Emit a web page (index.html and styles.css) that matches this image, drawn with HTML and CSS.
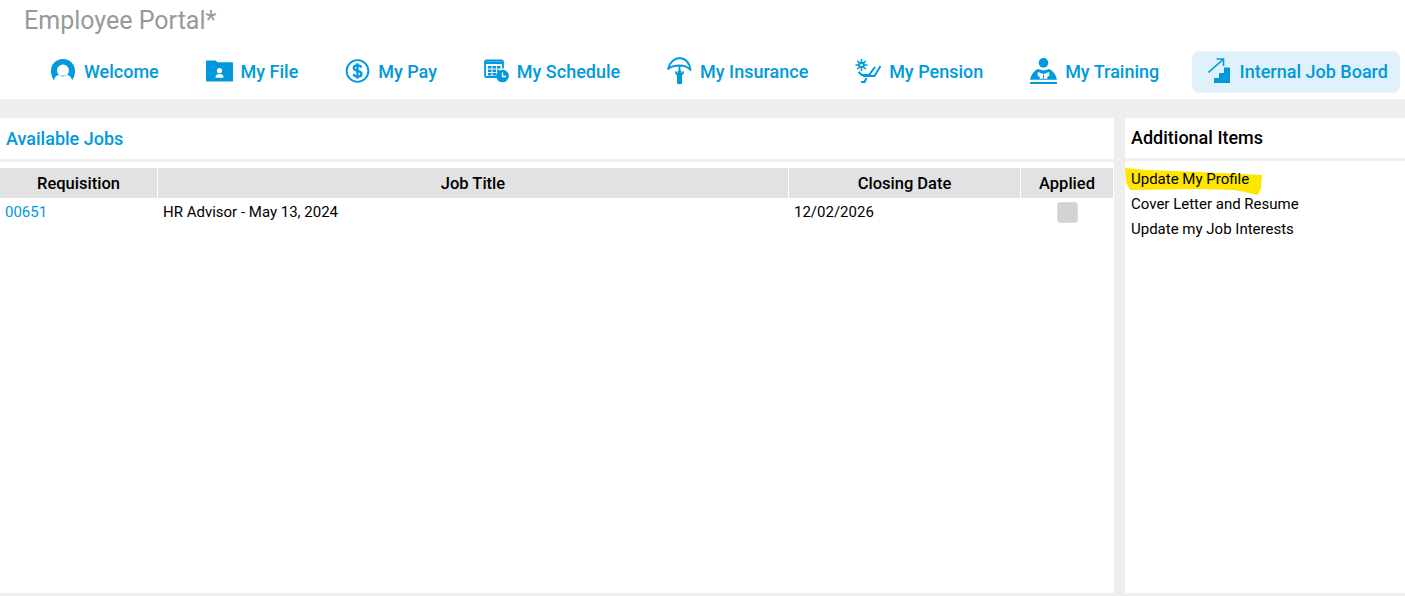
FILE: index.html
```html
<!DOCTYPE html>
<html lang="en">
<head>
<meta charset="utf-8">
<title>Employee Portal</title>
<link rel="stylesheet" href="styles.css">
</head>
<body>
<header class="top">
  <div class="brand">Employee Portal*</div>
  <nav class="nav">
    <a class="nav-item">
      <svg class="ico w26" viewBox="0 0 26 24"><path fill="#0099dd" fill-rule="evenodd" d="M13 0C6 0 1 5 1 12c0 3 1 6 2 8l1 1c1-3 2-4 4-5 3 1 7 1 10 0 2 1 3 2 4 5l1-1c1-2 2-5 2-8C25 5 20 0 13 0zm0 5.500a6 6 0 1 1 0 12 6 6 0 0 1 0-12z"/></svg>
      <span>Welcome</span>
    </a>
    <a class="nav-item">
      <svg class="ico w27" viewBox="0 0 28 22"><path fill="#0099dd" fill-rule="evenodd" d="M0 1q0-1 1-1h9l2 2h15q1 0 1 1v18q0 1-1 1H1q-1 0-1-1zM14 8a2.700 2.700 0 1 0 0 5.400 2.700 2.700 0 0 0 0-5.400zM10 18h8v-2q-1-2-4-2t-4 2z"/></svg>
      <span>My File</span>
    </a>
    <a class="nav-item">
      <svg class="ico w25" viewBox="0 0 25 25"><circle cx="12.500" cy="12.500" r="11.300" fill="none" stroke="#0099dd" stroke-width="2"/><path fill="none" stroke="#0099dd" stroke-width="2.400" d="M16.500 8.800c-.6-1.500-2.200-2.100-4-2.100-2.200 0-3.900 1-3.900 2.800 0 4 8 1.800 8 6 0 1.800-1.800 2.800-4 2.800-2 0-3.700-.8-4.300-2.400M12.500 4.500v16"/></svg>
      <span>My Pay</span>
    </a>
    <a class="nav-item">
      <svg class="ico w25" viewBox="0 0 25 23"><path fill="none" stroke="#0099dd" stroke-width="1.800" d="M14 17.500H2.500Q1 17.500 1 16V2.500Q1 1 2.500 1h15Q19 1 19 2.500V9"/><path fill="#0099dd" d="M1 2h18v2.500H1zM4 6.500h3.500v2.500H4zM8.500 6.500H12v2.500H8.500zM13 6.500h3.500v2.500H13zM4 10h3.500v2.500H4zM8.500 10H12v2.500H8.500zM13 10h2v2.500h-2zM4 13.500h3.500V16H4zM8.500 13.500H12V16H8.500z"/><circle cx="18.500" cy="16.500" r="6.300" fill="#0099dd"/><path fill="none" stroke="#fff" stroke-width="1.400" d="M18.500 13v4h3.500"/></svg>
      <span>My Schedule</span>
    </a>
    <a class="nav-item">
      <svg class="ico w25 tall" viewBox="0 0 25 28"><path fill="none" stroke="#0099dd" stroke-width="1.800" stroke-linejoin="round" d="M1 12C3 5 7 1.500 12.500 1c6 .5 10 4.500 11 12-3-3.500-7-4.500-11-4.500S4 9.500 1 12zM12.500 8.500v5"/><circle cx="12.500" cy="15" r="2" fill="#0099dd"/><path fill="#0099dd" d="M8.500 13.500l2 2.500h4l2-2.500.5 2.500-2 2.500v8q-2.500 1.500-5 0v-8L8 16z"/></svg>
      <span>My Insurance</span>
    </a>
    <a class="nav-item">
      <svg class="ico w26" viewBox="0 0 26 24"><path fill="none" stroke="#0099dd" stroke-width="1.500" d="M6.500 0v12M.5 6h12M2.200 1.700l8.600 8.600M10.800 1.700l-8.600 8.600"/><circle cx="6.500" cy="6" r="3.300" fill="#0099dd"/><circle cx="6.500" cy="6" r="1.300" fill="#fff"/><path fill="none" stroke="#0099dd" stroke-width="2" d="M3.500 13l3.500 3h7l6-8M25.500 7l-6 10H8M6 23h3.500l2-4"/></svg>
      <span>My Pension</span>
    </a>
    <a class="nav-item training">
      <svg class="ico w27 tall" viewBox="0 0 28 28"><circle cx="14" cy="5.500" r="5" fill="#0099dd"/><path fill="#0099dd" d="M0 23c1-5 4-9 8-11l6 1.500L20 12c4 2 7 6 8 11z"/><path fill="#fff" d="M8 15l6 2 6-2v4l-2 1v2h-8v-2l-2-1z"/><path fill="#0099dd" d="M13.500 17.500h1V22h-1zM0 25.500h28v2H0z"/></svg>
      <span>My Training</span>
    </a>
    <a class="nav-item active">
      <svg class="ico w24 tall" viewBox="0 0 24 26"><path fill="none" stroke="#0099dd" stroke-width="1.600" d="M.5 14.500L15 1.500M8.500 1h7v7"/><path fill="#0099dd" d="M6 25v-5h5v-5h5V9.500h6V25z"/></svg>
      <span>Internal Job Board</span>
    </a>
  </nav>
</header>
<main class="content">
  <section class="panel jobs">
    <h2 class="panel-title blue">Available Jobs</h2>
    <div class="rule-left"></div>
    <div class="table-gap"></div>
    <div class="grid head">
      <div class="cell">Requisition</div>
      <div class="cell">Job Title</div>
      <div class="cell">Closing Date</div>
      <div class="cell">Applied</div>
    </div>
    <div class="grid row">
      <div class="link">00651</div>
      <div>HR Advisor - May 13, 2024</div>
      <div>12/02/2026</div>
      <div class="check-wrap"><span class="check"></span></div>
    </div>
  </section>
  <aside class="panel side">
    <h2 class="panel-title side-title">Additional Items</h2>
    <div class="rule-right"></div>
    <ul class="links">
      <li class="marked">
        <svg class="scribble" viewBox="0 0 138 28"><path fill="#ffe600" d="M0 0L20 2 75 4l62 3-1 13-3 7-23-5-35-1-70 1-4-8z"/></svg>
        <span class="mark-text">Update My Profile</span>
      </li>
      <li>Cover Letter and Resume</li>
      <li>Update my Job Interests</li>
    </ul>
  </aside>
</main>
</body>
</html>
```
FILE: styles.css
```css
* { box-sizing: border-box; }
html, body { margin: 0; padding: 0; }
body {
  width: 1405px;
  height: 596px;
  overflow: hidden;
  background: #eeeeee;
  font-family: Roboto, "Liberation Sans", sans-serif;
  color: #000;
}
.top {
  height: 99px;
  background: #fff;
  padding-top: 5px;
}
.brand {
  height: 46px;
  line-height: 32px;
  padding-left: 24px;
  font-size: 25px;
  color: #999999;
}
.nav {
  display: flex;
  align-items: center;
  justify-content: space-between;
  height: 42px;
  padding: 0 5px 0 34px;
}
.nav-item {
  display: flex;
  align-items: center;
  gap: 8px;
  height: 42px;
  padding: 0 16px 2px;
  border-radius: 8px;
  font-size: 18px;
  font-weight: 500;
  color: #0099dd;
  white-space: nowrap;
}
.nav-item.training { margin-right: 1.500px; }
.nav-item.active { background: #dff2fc; padding: 0 12px 2px 16px; }
.ico { display: block; height: 24px; flex: none; }
.ico.tall { height: 28px; }
.w24 { width: 24px; }
.w25 { width: 25px; }
.w26 { width: 26px; }
.w27 { width: 27px; }
.content {
  display: flex;
  height: 475px;
  margin-top: 19px;
  gap: 11px;
}
.panel { background: #fff; height: 475px; }
.jobs { width: 1114px; }
.side { width: 280px; }
.panel-title {
  margin: 0;
  height: 41px;
  line-height: 42px;
  font-size: 18px;
  font-weight: 500;
}
.blue { color: #0099dd; padding-left: 6px; }
.side-title { height: 40px; line-height: 40px; padding-left: 6px; }
.rule-left { height: 3px; background: #eeeeee; }
.rule-right { height: 3px; background: #eeeeee; }
.table-gap { height: 6px; }
.grid {
  display: grid;
  grid-template-columns: 157px 630px 231px 92px;
  gap: 0 1px;
  font-size: 15px;
}
.head { height: 30px; grid-auto-rows: 30px; background: #fff; margin-right: 1px; }
.cell {
  background: #e2e2e2;
  font-size: 16.500px;
  font-weight: 500;
  line-height: 31px;
  text-align: center;
}
.row { height: 28px; line-height: 28px; }
.row > div { padding-left: 5px; }
.link { color: #0099dd; }
.row .check-wrap { padding: 4px 0 0; display: flex; justify-content: center; }
.check {
  width: 21px;
  height: 21px;
  background: #d3d3d3;
  border: 1px solid #dddddd;
  border-radius: 3px;
}
.links {
  list-style: none;
  margin: 0;
  padding: 6px 0 0 6px;
  font-size: 15px;
  line-height: 25px;
}
.marked { position: relative; }
.scribble {
  position: absolute;
  left: -6px;
  top: 1px;
  width: 138px;
  height: 28px;
}
.mark-text { position: relative; }
```
